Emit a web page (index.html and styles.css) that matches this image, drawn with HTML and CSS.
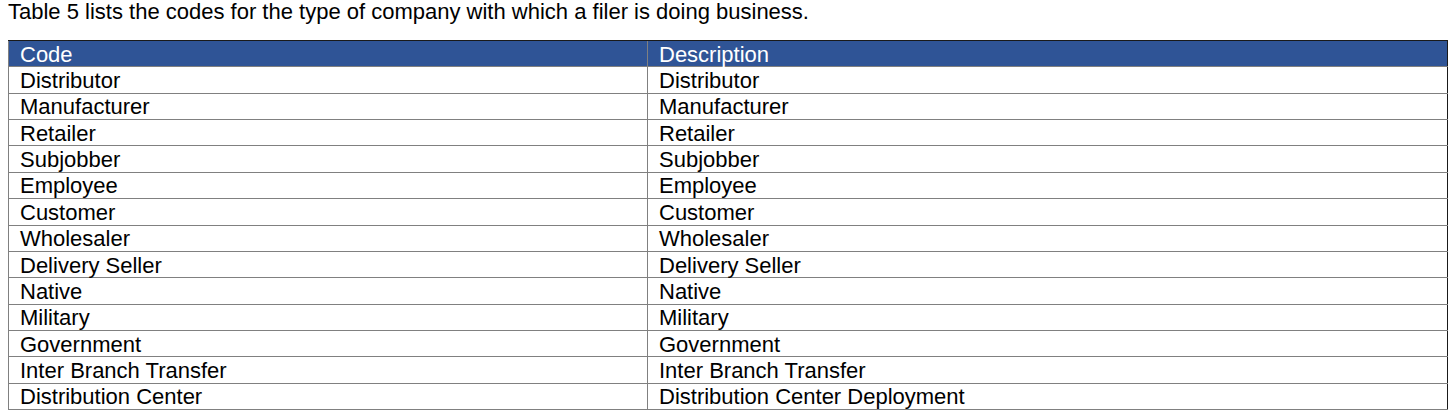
FILE: index.html
```html
<!DOCTYPE html>
<html>
<head>
<meta charset="utf-8">
<link rel="stylesheet" href="styles.css">
</head>
<body>
<p class="intro">Table 5 lists the codes for the type of company with which a filer is doing business.</p>
<table class="codes">
  <thead>
    <tr><th class="col-code">Code</th><th>Description</th></tr>
  </thead>
  <tbody>
    <tr><td>Distributor</td><td>Distributor</td></tr>
    <tr><td>Manufacturer</td><td>Manufacturer</td></tr>
    <tr><td>Retailer</td><td>Retailer</td></tr>
    <tr><td>Subjobber</td><td>Subjobber</td></tr>
    <tr><td>Employee</td><td>Employee</td></tr>
    <tr><td>Customer</td><td>Customer</td></tr>
    <tr><td>Wholesaler</td><td>Wholesaler</td></tr>
    <tr><td>Delivery Seller</td><td>Delivery Seller</td></tr>
    <tr><td>Native</td><td>Native</td></tr>
    <tr><td>Military</td><td>Military</td></tr>
    <tr><td>Government</td><td>Government</td></tr>
    <tr><td>Inter Branch Transfer</td><td>Inter Branch Transfer</td></tr>
    <tr><td>Distribution Center</td><td>Distribution Center Deployment</td></tr>
  </tbody>
</table>
</body>
</html>
```
FILE: styles.css
```css
html, body {
  margin: 0;
  padding: 0;
  background: #ffffff;
}
body {
  padding: 0 8px;
  font-family: "Liberation Sans", Arial, sans-serif;
  color: #000;
}
.intro {
  margin: 0;
  font-size: 22px;
  line-height: 24px;
  height: 40px;
}
.codes {
  width: 1440px;
  border-collapse: collapse;
  border: 1px solid #1a1a1a;
  font-size: 22px;
}
.codes th, .codes td {
  text-align: left;
  font-weight: normal;
  padding: 2px 0 0 11px;
  height: 23.36px;
  line-height: 22px;
  border-top: 1px solid #808080;
  border-bottom: 1px solid #808080;
  border-left: 1px solid #808080;
  vertical-align: middle;
}
.codes th {
  background: #2f5496;
  color: #ffffff;
  border-top: 1px solid #1a1a1a;
  border-bottom: 1px solid #808080;
}
.col-code {
  width: 627px;
}
```
